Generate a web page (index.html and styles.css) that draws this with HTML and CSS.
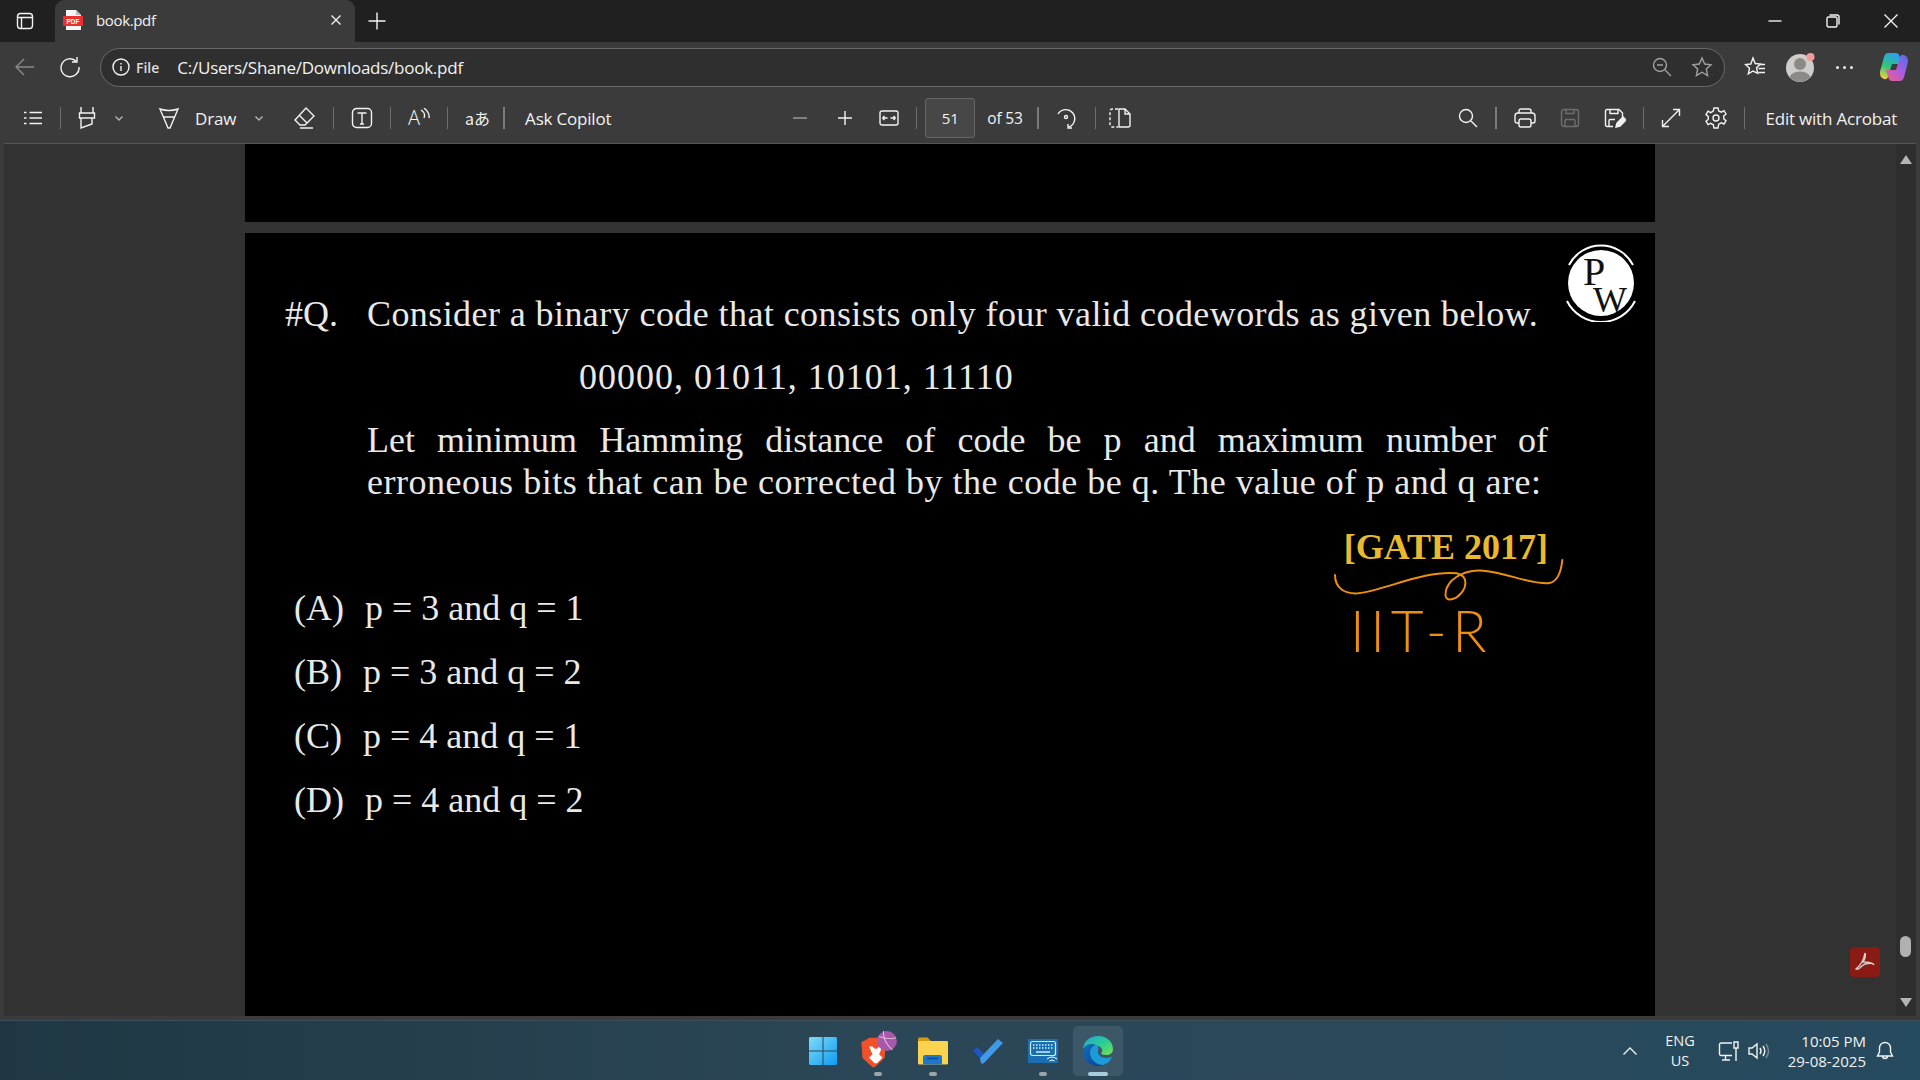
FILE: index.html
```html
<!DOCTYPE html>
<html lang="en">

<head>
<meta charset="UTF-8">
<meta name="viewport" content="width=device-width, initial-scale=1.0">
<title>book.pdf</title>
<link rel="stylesheet" href="styles.css">
</head>

<body>

<div class="tabstrip">
    <svg class="ic workspaces" width="20" height="20" viewBox="0 0 20 20"><rect x="2.5" y="2.5" width="15" height="15" rx="3"/><path d="M2.5 6.5h15M6.5 6.5v11"/></svg>
    <div class="tab">
        <svg class="pdf-icon" width="20" height="22" viewBox="0 0 20 22"><path d="M3 1h10l5 5v15H3z" fill="#f4f4f4"/><path d="M13 1l5 5h-5z" fill="#bbb"/><rect x="0" y="7" width="20" height="10" rx="1" fill="#e8312f"/><text x="10" y="14.500" class="pdf-label">PDF</text></svg>
        <span class="tab-title">book.pdf</span>
        <svg class="ic tab-close" width="14" height="14" viewBox="0 0 14 14"><path d="M2.5 2.5l9 9M11.5 2.5l-9 9"/></svg>
    </div>
    <svg class="ic new-tab" width="20" height="20" viewBox="0 0 20 20"><path d="M10 1.5v17M1.5 10h17"/></svg>
    <div class="window-controls">
        <svg class="ic" width="14" height="14" viewBox="0 0 14 14"><path d="M.5 7h13"/></svg>
        <svg class="ic" width="14" height="14" viewBox="0 0 14 14"><rect x="1" y="3" width="10" height="10" rx="1.5"/><path d="M3.5 1h7.5a2 2 0 0 1 2 2v7.500"/></svg>
        <svg class="ic" width="14" height="14" viewBox="0 0 14 14"><path d="M.5.5l13 13M13.500.5l-13 13"/></svg>
    </div>
</div>

<div class="addressbar">
    <svg class="ic nav-back" width="22" height="22" viewBox="0 0 22 22"><path d="M20 11H2M10 3l-8 8 8 8"/></svg>
    <svg class="ic nav-reload" width="22" height="22" viewBox="0 0 22 22"><path d="M17.500 5.500A9 9 0 1 0 20 11M18 1v5h-5"/></svg>
    <div class="omnibox">
        <svg class="ic" width="18" height="18" viewBox="0 0 18 18"><circle cx="9" cy="9" r="8"/><path d="M9 8v5M9 5v1.500"/></svg>
        <span class="scheme">File</span>
        <span class="url">C:/Users/Shane/Downloads/book.pdf</span>
        <svg class="ic dim omni-zoom" width="20" height="20" viewBox="0 0 20 20"><circle cx="8" cy="8" r="6.500"/><path d="M5 8h6M13 13l6 6"/></svg>
        <svg class="ic dim omni-star" width="22" height="22" viewBox="0 0 22 22"><path d="M11 2l2.700 6 6.300.7-4.700 4.300 1.300 6.500L11 16.200 5.400 19.500l1.300-6.500L2 8.700 8.300 8z"/></svg>
    </div>
    <svg class="ic favs" width="22" height="22" viewBox="0 0 22 22"><path d="M9 2l2.200 5.500 5.300.5-4 3.700 1.200 5.600L9 15l-4.700 2.800 1.200-5.600-4-3.700 5.300-.5zM15 8.500h6M14.500 12.500h6.500M14.500 16.500h6.500"/></svg>
    <svg class="avatar" width="32" height="32" viewBox="0 0 32 32"><circle cx="15" cy="17" r="14" fill="#cfcdca"/><circle cx="15" cy="13" r="6" fill="#8c8a87"/><path d="M4.500 26a11 8 0 0 1 21 0 14 14 0 0 1-21 0z" fill="#8c8a87"/><circle cx="25.500" cy="6" r="4" fill="#f59a9a"/></svg>
    <span class="more"><i></i><i></i><i></i></span>
    <svg class="copilot" width="30" height="30" viewBox="0 0 30 30">
        <defs>
            <linearGradient id="copA" x1=".6" y1="0" x2=".2" y2="1"><stop offset="0" stop-color="#2b9ff0"/><stop offset=".55" stop-color="#2fc77a"/><stop offset="1" stop-color="#f2d23c"/></linearGradient>
            <linearGradient id="copB" x1="1" y1="0" x2="0" y2="1"><stop offset="0" stop-color="#4a6fe8"/><stop offset=".5" stop-color="#b05be0"/><stop offset="1" stop-color="#f0607a"/></linearGradient>
        </defs>
        <path d="M9 1h8c2 0 3 1 3.500 3L23 12H13l-4 13c-1 2-2 2.500-4 2-3-1-4-3-4-6 0-2 .5-3 1-5l3-11C6 2 7 1 9 1z" fill="url(#copA)"/>
        <path d="M21 29h-8c-2 0-3-1-3.500-3L7 18h10l4-13c1-2 2-2.500 4-2 3 1 4 3 4 6 0 2-.5 3-1 5l-3 11c-1 3-2 4-4 4z" fill="url(#copB)"/>
    </svg>
</div>

<div class="panel">
    <div class="pdfbar">
        <div class="tools">
            <svg class="ic tool" width="20" height="20" viewBox="0 0 20 20"><path d="M6.500 4.500H19M6.500 10H19M6.500 15.500H19M1 4.500h2.500M1 10h2.500M1 15.500h2.500"/></svg>
            <i class="sep narrow"></i>
            <svg class="ic tool" width="22" height="24" viewBox="0 0 22 24"><path d="M5 1v6h12V1M3.500 7h15v5h-15zM5 12v10l11-4v-6"/></svg>
            <svg class="ic chev" width="10" height="10" viewBox="0 0 10 10"><path d="M1.500 3.500L5 7l3.500-3.500"/></svg>
            <svg class="ic tool draw-icon" width="24" height="24" viewBox="0 0 24 24"><path d="M3 3q9 3 18 0L13 22h-2zM6.500 11h11"/></svg>
            <span class="tool-text draw-label">Draw</span>
            <svg class="ic chev draw-chev" width="10" height="10" viewBox="0 0 10 10"><path d="M1.500 3.500L5 7l3.500-3.500"/></svg>
            <svg class="ic tool eraser" width="24" height="24" viewBox="0 0 24 24"><path d="M14 2l8 8-9 9H8l-5-5zM7.500 9.500l8 8M8 22h13"/></svg>
            <i class="sep"></i>
            <svg class="ic tool" width="22" height="22" viewBox="0 0 22 22"><rect x="1.500" y="1.500" width="19" height="19" rx="4"/><path d="M6.500 6h9M11 6v11M9 17h4"/></svg>
            <i class="sep"></i>
            <span class="tool read-aloud">A<svg class="ic" width="10" height="13" viewBox="0 0 10 13"><path d="M1 2q5 3 3 8M4 0q6 5 5 10"/></svg></span>
            <i class="sep"></i>
            <span class="tool translate">aあ</span>
            <i class="sep strong"></i>
            <span class="tool-text copilot-label">Ask Copilot</span>
        </div>
        <div class="tools zoom-tools">
            <svg class="ic tool dim" width="14" height="14" viewBox="0 0 14 14"><path d="M0 7h14"/></svg>
            <svg class="ic tool plus" width="16" height="16" viewBox="0 0 16 16"><path d="M8 1v14M1 8h14"/></svg>
            <svg class="ic tool fit" width="20" height="16" viewBox="0 0 20 16"><rect x="1" y="1" width="18" height="14" rx="2"/><path d="M3.500 8h5M3.500 8l2-2M3.500 8l2 2M16.500 8h-5M16.500 8l-2-2M16.500 8l-2 2"/></svg>
            <i class="sep tight"></i>
            <span class="page-box">51</span>
            <span class="tool-text page-count">of 53</span>
            <i class="sep strong page-sep"></i>
            <svg class="ic tool rotate" width="22" height="26" viewBox="0 0 22 26"><path d="M3 9a9 9 0 1 1 11 13"/><circle cx="11" cy="12" r="1.500"/><path d="M13 19v4h4"/></svg>
            <i class="sep tight"></i>
            <svg class="ic tool page-view" width="22" height="20" viewBox="0 0 22 20"><path d="M9 1H3a2 2 0 0 0-2 2v14a2 2 0 0 0 2 2h6" stroke-dasharray="3 2"/><path d="M10 1h6l5 5v11a2 2 0 0 1-2 2h-9zM16 1v5h5"/></svg>
        </div>
        <div class="tools right-tools">
            <svg class="ic tool" width="20" height="20" viewBox="0 0 20 20"><circle cx="8" cy="8" r="6.500"/><path d="M13 13l6 6"/></svg>
            <i class="sep strong"></i>
            <svg class="ic tool" width="22" height="20" viewBox="0 0 22 20"><path d="M5 5V3a2 2 0 0 1 2-2h8a2 2 0 0 1 2 2v2M5 15H3a2 2 0 0 1-2-2V8a3 3 0 0 1 3-3h14a3 3 0 0 1 3 3v5a2 2 0 0 1-2 2h-2"/><rect x="5" y="11" width="12" height="8" rx="2"/></svg>
            <svg class="ic tool dim2" width="20" height="20" viewBox="0 0 20 20"><rect x="1.500" y="1.500" width="17" height="17" rx="2.500"/><path d="M6 1.500v4h8v-4M5 18.500v-6a1 1 0 0 1 1-1h8a1 1 0 0 1 1 1v6"/></svg>
            <svg class="ic tool" width="22" height="20" viewBox="0 0 22 20"><path d="M9 18.500H3A1.500 1.500 0 0 1 1.500 17V3A1.500 1.500 0 0 1 3 1.500h12L18.500 5v4M6 1.500v4h8v-4M5 18.500v-6a1 1 0 0 1 1-1h5"/><path d="M12 19l1-4 6-6 3 3-6 6z" fill="currentColor"/></svg>
            <i class="sep"></i>
            <svg class="ic tool" width="20" height="20" viewBox="0 0 20 20"><path d="M12 1.500h6.500V8M18.500 1.500l-17 17M1.500 12v6.500H8"/></svg>
            <svg class="ic tool" width="22" height="22" viewBox="0 0 22 22"><path d="M9 1h4l.7 3 2.600 1.100 2.700-1.500 2 3.400-2.300 2 .1 2.900 2.200 1.700-2 3.400-2.700-1.200-2.600 1.400L13 21H9l-.700-3.200-2.600-1.400L3 17.600l-2-3.400 2.200-1.700.1-2.900L1 7.600l2-3.400 2.700 1.500L8.300 4z"/><circle cx="11" cy="11" r="3"/></svg>
            <i class="sep last"></i>
            <span class="tool-text">Edit with Acrobat</span>
        </div>
    </div>

    <div class="viewer">
        <div class="page-prev"></div>
        <div class="page">
            <svg class="pw-logo" width="76" height="80" viewBox="0 0 76 80">
                <circle cx="38" cy="41" r="33" fill="#fff"/>
                <path d="M6 23a36 36 0 0 1 64 0M4 59a38 38 0 0 0 68 0" fill="none" stroke="#fff" stroke-width="2"/>
                <text x="20" y="43" class="pw-letter">P</text>
                <text x="30" y="70" class="pw-letter pw-small">W</text>
            </svg>

            <div class="question-row">
                <span class="question-mark">#Q.</span>
                <span class="wide">Consider a binary code that consists only four valid codewords as given below.</span>
            </div>
            <div class="codewords">00000, 01011, 10101, 11110</div>
            <div class="statement">
                <div class="line-full">Let minimum Hamming distance of code be p and maximum number of</div>
                <div class="wider">erroneous bits that can be corrected by the code be q. The value of p and q are:</div>
            </div>
            <div class="gate">[GATE 2017]</div>
            <div class="options">
                <div class="option"><span>(A)</span><span>p = 3 and q = 1</span></div>
                <div class="option"><span>(B)</span><span>p = 3 and q = 2</span></div>
                <div class="option"><span>(C)</span><span>p = 4 and q = 1</span></div>
                <div class="option"><span>(D)</span><span>p = 4 and q = 2</span></div>
            </div>

            <svg class="ink" width="360" height="440" viewBox="0 0 1080 1320">
                <path d="M105 1035c0 40 30 58 70 55 80-10 200-70 295-60 35 8 35 45 0 72-28 14-40 5-30-28 15-35 60-55 110-52 70 5 130 40 195 38 35-5 40-50 42-70"/>
                <text x="150" y="1266" textLength="410" lengthAdjust="spacing" class="ink-text">IIT-R</text>
            </svg>
        </div>

        <div class="acrobat-badge">
            <svg width="22" height="22" viewBox="0 0 22 22"><path d="M11 2c-1 6-4 12-9 16 3 2 4-3 9-5 4-1 8-2 9 1-1-3-7-3-11-3 2-3 3-6 2-9z" fill="none" stroke="#d9c9c7" stroke-width="1.500"/></svg>
        </div>
        <div class="scrollbar">
            <i class="arrow-up"></i>
            <i class="thumb"></i>
            <i class="arrow-down"></i>
        </div>
    </div>
</div>

<div class="taskbar">
    <div></div>
    <div class="apps">
        <div class="app">
            <svg width="30" height="30" viewBox="0 0 30 30">
                <defs><linearGradient id="win" x1="0" y1="0" x2="1" y2="1"><stop offset="0" stop-color="#7ddcfb"/><stop offset="1" stop-color="#0f9bf0"/></linearGradient></defs>
                <path d="M1 2.500A1.500 1.500 0 0 1 2.500 1h12v13.500H1zM15.500 1h12A1.500 1.500 0 0 1 29 2.500v12H15.500zM1 15.500h13.500V29h-12A1.500 1.500 0 0 1 1 27.500zM15.500 15.500H29v12a1.500 1.500 0 0 1-1.500 1.500h-12z" fill="url(#win)"/>
            </svg>
        </div>
        <div class="app running">
            <svg width="40" height="40" viewBox="0 0 36 36">
                <path d="M3 10l4-2 3-2h8l3 2 4 2-1 14-6 6-4 3-4-3-6-6z" fill="#f0512a"/>
                <path d="M10 14h3l2 2h2l2-2h3l-3 7 3 3-5 5h-2l-5-5 3-3z" fill="#fff"/>
                <circle cx="26" cy="9" r="9" fill="#a45aa8"/>
                <path d="M19 5q7 3 15 1M23 0q-1 9 8 17" fill="none" stroke="#e6b6d8" stroke-width="1"/>
            </svg>
        </div>
        <div class="app running">
            <svg width="32" height="28" viewBox="0 0 32 28">
                <path d="M1 2a1.500 1.500 0 0 1 1.500-1.500h8L14 4h-13z" fill="#d49a10"/>
                <path d="M1 4h29a1.500 1.500 0 0 1 1 1.500V26a1.500 1.500 0 0 1-1.500 1.500H2.500A1.500 1.500 0 0 1 1 26z" fill="#fcd34f"/>
                <path d="M6 27.500V20a2 2 0 0 1 2-2h15a2 2 0 0 1 2 2v7.500z" fill="#1f77c9"/>
                <path d="M10 21.500h11" stroke="#0d4c8c" stroke-width="1.500"/>
            </svg>
        </div>
        <div class="app">
            <svg width="32" height="28" viewBox="0 0 32 28">
                <path d="M1 14l4-4 7 7-4 4z" fill="#1b56c2"/>
                <path d="M8 21L26 2l5 4-19 20c-1 1-2 1-3 0z" fill="#3f9bea"/>
            </svg>
        </div>
        <div class="app running">
            <svg width="32" height="26" viewBox="0 0 32 26">
                <rect x="1" y="1" width="30" height="24" fill="#1a6fb0"/>
                <rect x="3.500" y="3.500" width="25" height="14" rx="2" fill="none" stroke="#cfeaf7" stroke-width="1.200"/>
                <path d="M6 7h20M6 10h20" stroke="#cfeaf7" stroke-width="1.500" stroke-dasharray="1.500 1.500"/>
                <path d="M9 14h14" stroke="#cfeaf7" stroke-width="1.500"/>
                <path d="M20 21q5-4 10 0M22.500 23q2.500-2 5 0" fill="none" stroke="#fff" stroke-width="1"/>
            </svg>
        </div>
        <div class="app active">
            <svg width="32" height="32" viewBox="0 0 32 32">
                <defs>
                    <linearGradient id="edgeA" x1="0" y1="0" x2="1" y2="1"><stop offset="0" stop-color="#1fa5d8"/><stop offset=".55" stop-color="#2dcf8f"/><stop offset="1" stop-color="#7be04f"/></linearGradient>
                    <linearGradient id="edgeB" x1="0" y1="0" x2="1" y2="1"><stop offset="0" stop-color="#0f6fbd"/><stop offset="1" stop-color="#0a3f8f"/></linearGradient>
                </defs>
                <path d="M1 14C2 6 8 1 16 1c9 0 15 6 15 13 0 4-3 6-7 6-3 0-5-1-5-2 2-1 2-6-3-7-6-1-12 0-15 3z" fill="url(#edgeA)"/>
                <path d="M1 14c3-5 9-6 13-4-4 1-6 4-6 8 0 6 6 12 13 12-2 1-3 1-5 1C7 31 0 24 1 14z" fill="url(#edgeB)"/>
                <path d="M21 30c-7 0-13-6-13-12 0-4 2-7 6-8 2 1 3 3 2 5-1 4 2 8 8 8 2 0 4-.5 6-1.500-1 4-4 7-9 8.500z" fill="#1b9bd8"/>
            </svg>
        </div>
    </div>
    <div class="tray">
        <svg class="ic" width="16" height="16" viewBox="0 0 16 16"><path d="M1.500 11.500L8 5l6.500 6.500"/></svg>
        <div class="lang"><span>ENG</span><span>US</span></div>
        <svg class="ic" width="22" height="22" viewBox="0 0 22 22"><path d="M14 3H3a1.500 1.500 0 0 0-1.500 1.500V14A1.500 1.500 0 0 0 3 15.500h11M7.500 15.500v4M4 20h8"/><path d="M16 2h4v6h-4zM18 8v13"/></svg>
        <svg class="ic" width="22" height="18" viewBox="0 0 22 18"><path d="M1 6v6h3l5 4V2L4 6zM12 6q2 3 0 6M15 4q3.500 5 0 10"/><path class="faint" d="M18 2q5 7 0 14"/></svg>
        <div class="clock"><span>10:05 PM</span><span>29-08-2025</span></div>
        <svg class="ic" width="18" height="20" viewBox="0 0 18 20"><path d="M9 1.500a5.500 5.500 0 0 0-5.500 5.500v4L1.500 15h15l-2-4V7A5.500 5.500 0 0 0 9 1.500zM6.500 15a2.500 2.500 0 0 0 5 0"/></svg>
    </div>
</div>

</body>
</html>
```

FILE: styles.css
```css
* { box-sizing: border-box; }
html, body { margin: 0; height: 100%; }
body { width: 1920px; height: 1080px; overflow: hidden; display: flex; flex-direction: column; background-color: #3b3b3b; color: #f2f2f2; font-family: "Open Sans", "Noto Sans", sans-serif; font-size: 14px; }

.ic { fill: none; stroke: currentColor; stroke-width: 1.4; flex: none; display: block; }
.ic.dim { color: #a0a0a0; }
.ic.dim2 { color: #6e6e6e; }

/* tab strip */
.tabstrip { height: 42px; flex: none; display: flex; align-items: center; background-color: #202020; padding-left: 15px; }
.workspaces { margin-right: 20px; }
.tab { width: 300px; height: 42px; display: flex; align-items: center; background-color: #3b3b3b; border-radius: 9px 9px 0 0; padding: 0 0 2px 8px; }
.pdf-icon { flex: none; }
.pdf-label { font-family: "Liberation Sans", sans-serif; font-size: 6.500px; font-weight: 700; fill: #fff; text-anchor: middle; stroke: none; }
.tab-title { margin-left: 13px; font-size: 15px; letter-spacing: -.35px; }
.tab-close { margin-left: 173px; }
.new-tab { margin-left: 12px; }
.window-controls { margin-left: auto; display: flex; gap: 44px; padding-right: 22px; }

/* address bar */
.addressbar { height: 48px; flex: none; display: flex; align-items: center; padding: 2px 0 0 14px; }
.nav-back { color: #8a8a8a; }
.nav-reload { margin-left: 23px; }
.omnibox { width: 1625px; height: 39px; margin-left: 19px; display: flex; align-items: center; padding: 0 11px 0 11px; background-color: #2f2f2f; border: 1px solid #6a6a6a; border-radius: 20px; }
.scheme { margin-left: 6px; font-size: 14px; font-weight: 600; color: #dcdcdc; }
.url { margin-left: 18px; font-size: 17px; letter-spacing: -.25px; }
.omni-zoom { margin-left: auto; }
.omni-star { margin-left: 19px; }
.favs { margin-left: 19px; }
.avatar { margin-left: 19px; flex: none; }
.more { margin-left: 19px; display: flex; gap: 4px; }
.more i { width: 3px; height: 3px; border-radius: 50%; background-color: #eee; }
.copilot { margin-left: 26px; flex: none; }

/* pdf toolbar */
.panel { flex: 1; min-height: 0; display: flex; flex-direction: column; margin: 3px 4px 4px; background-color: #3b3b3b; border-radius: 8px 8px 0 0; }
.pdfbar { height: 51px; flex: none; display: flex; align-items: center; padding-left: 15px; border-bottom: 1px solid #555; }
.tools { display: flex; align-items: center; }
.tool { flex: none; margin: 0 4px; }
.sep { width: 1px; height: 22px; flex: none; background-color: #6e6e6e; margin: 0 13px; }
.sep.narrow { margin: 0 11px 0 13px; }
.sep.strong { width: 2px; background-color: #7a7a7a; }
.sep.tight { margin: 0 8px 0 15px; }
.chev { margin-left: 12px; color: #b5b5b5; }
.draw-icon { margin-left: 33px; }
.draw-label { margin-left: 10px; }
.draw-chev { margin-left: 18px; }
.eraser { margin-left: 28px; }
.tool-text { font-size: 17px; letter-spacing: -.2px; white-space: nowrap; }
.read-aloud { width: 22px; display: flex; align-items: flex-start; font-size: 20px; line-height: 1; font-weight: 300; }
.translate { font-family: "Noto Sans CJK JP", sans-serif; font-size: 16px; width: 19px; white-space: nowrap; margin-right: 6px; }
.copilot-label { margin-left: 7px; }

.zoom-tools { margin-left: 182px; }
.zoom-tools .tool { margin: 0 14px 0 0; }
.zoom-tools .plus { margin: 0 26px 0 16px; }
.zoom-tools .fit { margin-right: 2px; }
.zoom-tools .rotate { margin-right: 3px; }
.zoom-tools .page-view { margin: 0 0 0 5px; }
.page-box { width: 50px; height: 40px; display: flex; align-items: center; justify-content: center; background-color: #474747; border: 1px solid #666; border-radius: 3px; font-size: 15px; }
.page-count { margin-left: 12px; font-size: 15.500px; }
.page-sep { margin: 0 16px 0 14px; }
.right-tools { margin-left: auto; padding-right: 19px; }
.right-tools .tool { margin: 0 12px; }
.right-tools .sep { margin: 0 5px; }
.right-tools .sep.last { margin: 0 20px 0 5px; }

/* pdf viewer */
.viewer { flex: 1; min-height: 0; position: relative; overflow: hidden; display: flex; flex-direction: column; align-items: center; background-color: #323232; padding-right: 20px; }
.page-prev { width: 1410px; height: 78px; flex: none; background-color: #000; }
.page { width: 1410px; flex: 1; margin-top: 11px; position: relative; overflow: hidden; background-color: #000; padding: 59px 0 0 40px; color: #e9e9e9; font-family: "Liberation Serif", serif; font-size: 36px; line-height: 44px; }
.question-row { display: flex; white-space: nowrap; }
.question-mark { width: 82px; flex: none; }
.wide { letter-spacing: .42px; }
.codewords { margin: 19px 0 0 294px; letter-spacing: 1px; }
.statement { width: 1181px; margin: 20px 0 0 82px; line-height: 42px; white-space: nowrap; }
.line-full { text-align: justify; text-align-last: justify; white-space: normal; }
.wider { letter-spacing: .52px; }
.gate { width: 1263px; margin-top: 22px; text-align: right; font-weight: 700; color: #e9b92e; }
.options { margin: 17px 0 0 9px; display: flex; flex-direction: column; gap: 20px; }
.option { display: flex; gap: 21px; }
.pw-logo { position: absolute; left: 1318px; top: 9px; }
.pw-letter { font-family: "Liberation Serif", serif; font-size: 40px; fill: #111; }
.pw-small { font-size: 36px; }
.ink { position: absolute; left: 1055px; top: -3px; }
.ink path { fill: none; stroke: #ef8f10; stroke-width: 6; stroke-linecap: round; }
.ink-text { font-family: Lato, sans-serif; font-weight: 300; font-size: 170px; fill: #ef8f10; }

.acrobat-badge { position: absolute; left: 1846px; top: 803px; width: 30px; height: 30px; display: flex; align-items: center; justify-content: center; background-color: #8a1a14; border-radius: 4px; }
.scrollbar { position: absolute; right: 0; top: 0; bottom: 0; width: 20px; background-color: #2e2e2e; }
.arrow-up, .arrow-down, .thumb { position: absolute; display: block; }
.arrow-up { left: 4px; top: 11px; border: 6px solid transparent; border-top: 0; border-bottom: 9px solid #b5b5b5; }
.arrow-down { left: 4px; bottom: 9px; border: 6px solid transparent; border-bottom: 0; border-top: 9px solid #b5b5b5; }
.thumb { left: 4px; top: 792px; width: 11px; height: 21px; border-radius: 6px; background-color: #b0b0b0; }

/* windows taskbar */
.taskbar { height: 60px; flex: none; display: grid; grid-template-columns: 1fr auto 1fr; align-items: center; background: linear-gradient(90deg, #1e3743, #2b4656 45%, #264a5e); border-top: 1px solid #3f4f5a; }
.apps { display: flex; align-items: center; gap: 5px; }
.app { width: 50px; height: 50px; position: relative; display: flex; align-items: center; justify-content: center; border-radius: 5px; }
.app.running::after, .app.active::after { content: ""; position: absolute; bottom: 0; left: 21px; width: 8px; height: 4px; border-radius: 2px; background-color: #9aa5ab; }
.app.active { background-color: #3c5868; }
.app.active::after { left: 15px; width: 20px; background-color: #a8ccd8; }
.tray { display: flex; align-items: center; justify-content: flex-end; padding-right: 26px; font-size: 14.500px; }
.lang { margin: 0 23px 0 27px; display: flex; flex-direction: column; align-items: center; line-height: 20px; }
.tray .ic + .ic { margin-left: 8px; }
.faint { opacity: .4; }
.clock { margin: 0 10px 0 18px; display: flex; flex-direction: column; align-items: flex-end; font-size: 15px; line-height: 20px; }
```
